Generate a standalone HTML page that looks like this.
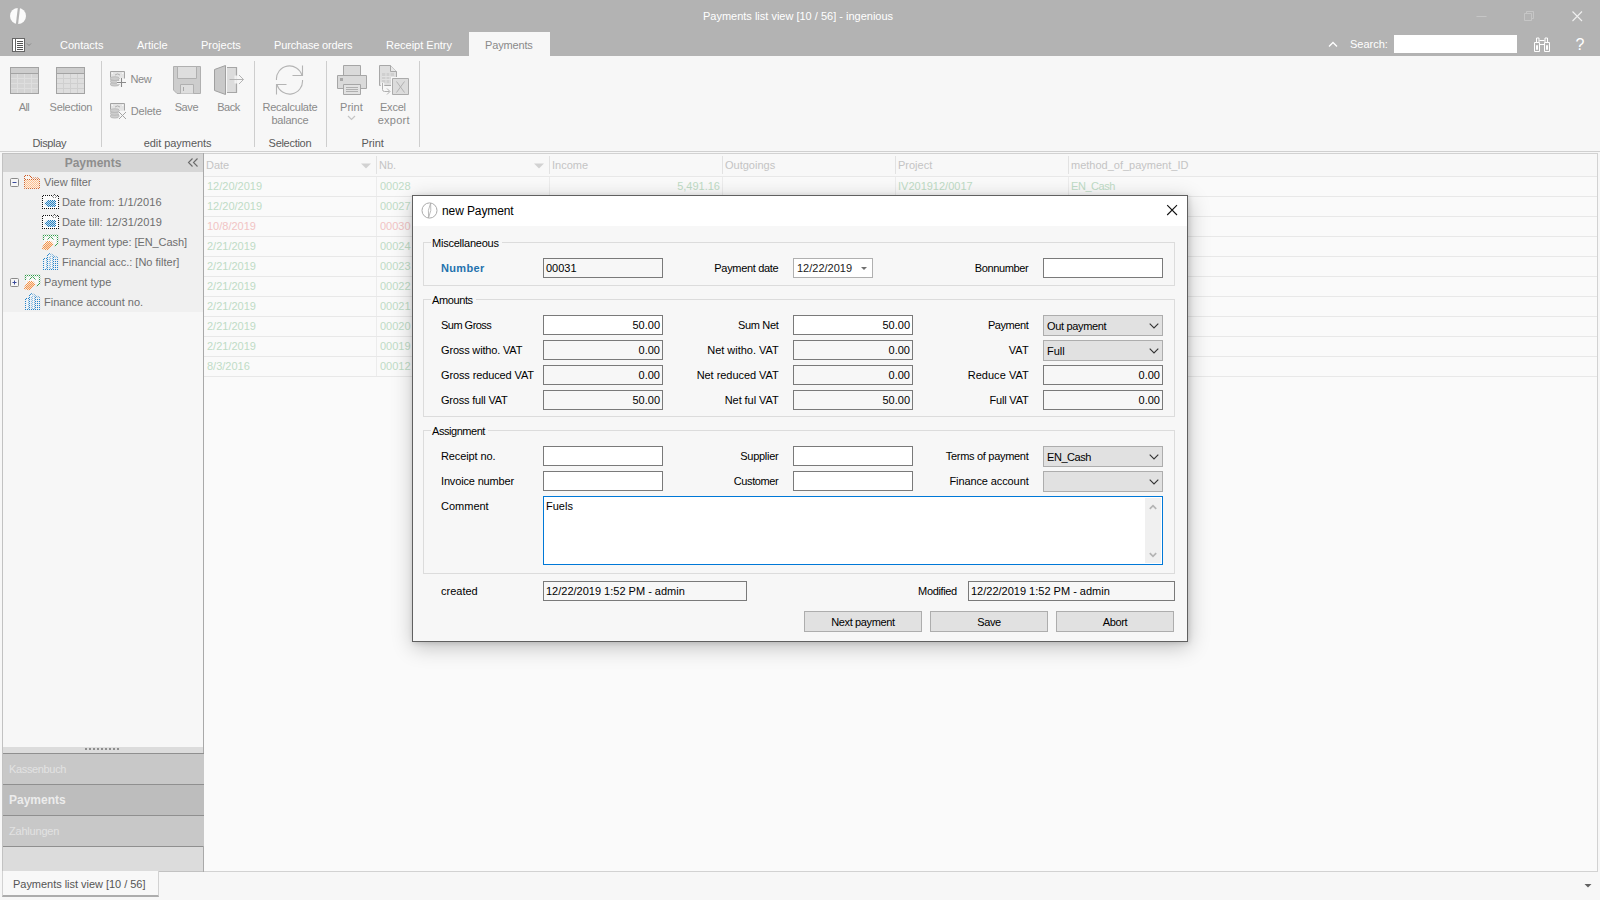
<!DOCTYPE html>
<html>
<head>
<meta charset="utf-8">
<title>Payments list view</title>
<style>
*{box-sizing:border-box;margin:0;padding:0}
html,body{width:1600px;height:900px;overflow:hidden;background:#f7f7f7}
body{font-family:"Liberation Sans",sans-serif;font-size:11px;color:#000;position:relative}
.a{position:absolute;white-space:nowrap}
#hdr{left:0;top:0;width:1600px;height:56px;background:#b3b3b3}
.tab{color:#fff;top:38px;height:14px;line-height:14px}
#tabact{left:469px;top:32px;width:81px;height:24px;background:#f7f7f7}
#rib{left:0;top:56px;width:1600px;height:96px;background:#f7f7f7}
.rl{color:#8a8a8a;text-align:center;line-height:13px}
.gl{color:#5a5a5a;text-align:center;top:137px;line-height:13px}
.sep{width:1px;top:61px;height:86px;background:#cecece}
.tr{color:#6e6e6e;height:14px;line-height:14px}
.nav{left:3px;width:201px;height:31px;background:#c8c8c8;border-top:1px solid #8f8f8f;color:#e2e2e2;padding-left:6px;line-height:31px}
.gh{color:#c4c4c4;top:158px;line-height:14px}
.gr{left:204px;width:1393px;height:1px;background:#e8e8e8}
.gv{top:176px;width:1px;height:200px;background:#ececec}
.gc{color:#bfdcc6;line-height:14px}
.gc.r{color:#f1c4c4}
#dlg{left:412px;top:195px;width:776px;height:447px;background:#f7f7f7;border:1px solid #606060;box-shadow:1px 5px 20px 0 rgba(0,0,0,.24),1px 1px 5px 0 rgba(0,0,0,.14)}
#dlgt{left:0;top:0;width:774px;height:30px;background:#fff}
.grp{border:1px solid #dcdcdc}
.grpl{background:#f7f7f7;padding:0 3px 0 1px;line-height:13px}
.lb{line-height:13px}
.in{height:20px;border:1px solid #7a7a7a;background:#fff;line-height:18px;padding:0 2px}
.in.ro{background:#f7f7f7}
.in.n{text-align:right}
.cb{height:21px;border:1px solid #adadad;background:#e1e1e1;line-height:19px;padding:1px 3px 0}
.btn{height:21px;width:118px;border:1px solid #adadad;background:#e1e1e1;text-align:center;line-height:19px;padding-top:1px;letter-spacing:-0.35px}
</style>
</head>
<body>
<div id="hdr" class="a">
<svg class="a" style="left:9px;top:7px" width="18" height="18" viewBox="0 0 18 18"><ellipse cx="9" cy="9" rx="8" ry="8.1" fill="#fbfbfb"/><path d="M10 0 L7.900 18" stroke="#b3b3b3" stroke-width="2.200" fill="none"/></svg>
<div class="a" style="left:598px;top:9px;width:400px;text-align:center;color:#fff;line-height:14px">Payments list view [10 / 56] - ingenious</div>
<svg class="a" style="left:1470px;top:8px" width="120" height="16" viewBox="0 0 120 16"><path d="M6.5 8.5h10" stroke="#c6c6c6" fill="none"/><path d="M54.5 5.5h7v7h-7z M56.5 5.5v-2h7v7h-2" stroke="#c6c6c6" fill="none"/><path d="M102.5 3.5l9.5 9.5M112 3.5l-9.5 9.5" stroke="#f0f0f0" stroke-width="1.1" fill="none"/></svg>
<svg class="a" style="left:11px;top:37px" width="24" height="16" viewBox="0 0 24 16"><rect x="1.5" y="1.5" width="12" height="13" fill="#fff" stroke="#666" stroke-width="1"/><path d="M4.5 2v12" stroke="#666" stroke-width="1"/><path d="M6 4.5h6M6 6.5h6M6 8.5h6M6 10.5h6M6 12.5h6" stroke="#555" stroke-width="1"/><path d="M16 6.5l2 2l2-2" stroke="#8a8a8a" fill="none"/></svg>
<div id="tabact" class="a"></div>
<div class="a tab" style="left:60px">Contacts</div>
<div class="a tab" style="left:137px">Article</div>
<div class="a tab" style="left:201px">Projects</div>
<div class="a tab" style="left:274px;letter-spacing:-0.160px">Purchase orders</div>
<div class="a tab" style="left:386px">Receipt Entry</div>
<div class="a tab" style="left:485px;color:#8a8a8a;letter-spacing:-0.150px">Payments</div>
<svg class="a" style="left:1327px;top:39px" width="12" height="10" viewBox="0 0 12 10"><path d="M2 7.5l4-4l4 4" stroke="#fff" stroke-width="1.3" fill="none"/></svg>
<div class="a tab" style="left:1350px;top:37px">Search:</div>
<div class="a" style="left:1394px;top:35px;width:123px;height:18px;background:#fff"></div>
<svg class="a" style="left:1533px;top:36px" width="18" height="17" viewBox="0 0 18 17"><g stroke="#fff" fill="none" stroke-width="1"><path d="M1.5 6.5h5v9h-5z M11.5 6.5h5v9h-5z"/><path d="M3.5 6v-4h2.5v4 M12 6v-4h2.5v4"/><path d="M6.5 4.5h5M6.5 8.5h5"/><path d="M3.5 9.5h1v4h-1z M13.5 9.5h1v4h-1z"/></g></svg>
<div class="a" style="left:1575.500px;top:36px;color:#fff;font-size:16px;line-height:18px">?</div>
</div>
<div id="rib" class="a">
<svg class="a" style="left:10px;top:11px" width="29" height="27" viewBox="0 0 29 27"><rect x="0.5" y="0.5" width="28" height="26" fill="#d4d4d4" stroke="#a3a3a3"/><rect x="1" y="1" width="27" height="5" fill="#cdcdcd"/><path d="M0.5 6.5h28" stroke="#a3a3a3"/><path d="M1 11.5h27M1 16.5h27M1 21.5h27M7.5 7v19M14.5 7v19M21.5 7v19" stroke="#dedede"/></svg><svg class="a" style="left:56px;top:11px" width="29" height="27" viewBox="0 0 29 27"><rect x="0.5" y="0.5" width="28" height="26" fill="#dedede" stroke="#a3a3a3"/><rect x="1" y="1" width="27" height="5" fill="#cdcdcd"/><path d="M0.5 6.5h28" stroke="#a3a3a3"/><path d="M1 11.5h27M1 16.5h27M1 21.5h27M7.5 7v19M14.5 7v19M21.5 7v19" stroke="#cfcfcf"/></svg>
<div class="a rl" style="left:18.7px;top:45px;text-align:left;letter-spacing:-0.61px">All</div>

<div class="a rl" style="left:49.6px;top:45px;text-align:left;letter-spacing:-0.3px">Selection</div>

<div class="a sep" style="left:101px;top:5px"></div>
<svg class="a" style="left:110px;top:15px" width="17" height="17" viewBox="0 0 17 17"><path d="M0.5 9v-8.500h14v7" fill="#e3e3e3" stroke="#a4a4a4"/><rect x="1.500" y="1.500" width="1.500" height="1.500" fill="#f6f6f6"/><rect x="12" y="1.500" width="1.500" height="1.500" fill="#f6f6f6"/><path d="M5 4q2.500-2.200 5 0" fill="none" stroke="#b0b0b0"/><path d="M-0.500 6.500h11v3h6v8h-17z" fill="#f7f7f7" opacity="0.550"/><g fill="#cdcdcd" stroke="#b4b4b4" stroke-width="0.800"><ellipse cx="4.800" cy="13.200" rx="4.600" ry="1.900"/><ellipse cx="4.800" cy="10.400" rx="4.600" ry="1.900"/><ellipse cx="4.800" cy="7.600" rx="4.600" ry="1.900"/></g><path d="M7 11.500h9M11.500 7v9" stroke="#f7f7f7" stroke-width="3" fill="none"/><path d="M7 11.500h9M11.500 7v9" stroke="#8a8a8a" fill="none" stroke-width="1.100"/></svg><svg class="a" style="left:110px;top:47px" width="17" height="17" viewBox="0 0 17 17"><path d="M0.5 9v-8.500h14v7" fill="#e3e3e3" stroke="#a4a4a4"/><rect x="1.500" y="1.500" width="1.500" height="1.500" fill="#f6f6f6"/><rect x="12" y="1.500" width="1.500" height="1.500" fill="#f6f6f6"/><path d="M5 4q2.500-2.200 5 0" fill="none" stroke="#b0b0b0"/><path d="M-0.500 6.500h11v3h6v8h-17z" fill="#f7f7f7" opacity="0.550"/><g fill="#cdcdcd" stroke="#b4b4b4" stroke-width="0.800"><ellipse cx="4.800" cy="13.200" rx="4.600" ry="1.900"/><ellipse cx="4.800" cy="10.400" rx="4.600" ry="1.900"/><ellipse cx="4.800" cy="7.600" rx="4.600" ry="1.900"/></g><path d="M9 9l7 7M16 9l-7 7" stroke="#f7f7f7" stroke-width="2.500" fill="none"/><path d="M9 9l7 7M16 9l-7 7" stroke="#a4a4a4" fill="none"/></svg>
<div class="a rl" style="left:130.6px;top:17px;text-align:left;letter-spacing:-0.47px">New</div>

<div class="a rl" style="left:130.7px;top:49px;text-align:left;letter-spacing:-0.18px">Delete</div>

<svg class="a" style="left:173px;top:10px" width="28" height="28" viewBox="0 0 28 28"><path d="M0.5 0.5h27v27h-23.5l-3.5-3.5z" fill="#cdcdcd" stroke="#b0b0b0"/><path d="M4.5 0.5h19v12h-19z" fill="#dedede" stroke="#b0b0b0"/><path d="M7.5 27.5v-9h13v9" fill="#dedede" stroke="#b0b0b0"/><path d="M10.5 21v4" stroke="#a8a8a8"/></svg>
<div class="a rl" style="left:174.7px;top:45px;text-align:left;letter-spacing:-0.42px">Save</div>

<svg class="a" style="left:213px;top:9px" width="32" height="30" viewBox="0 0 32 30"><path d="M14 2.500h9.500v25h-9.500z" fill="#dcdcdc"/><path d="M14 2.500h9.500v25h-9.500" fill="none" stroke="#a6a6a6" stroke-width="1.200"/><path d="M1.500 4.500l11-4v29l-11-4z" fill="#c9c9c9" stroke="#a0a0a0"/><path d="M21.500 10.500h4v8h-4z" fill="#f7f7f7" opacity="0.850"/><path d="M16.500 14.500h14M26 10l4.500 4.500l-4.500 4.500" fill="none" stroke="#b4b4b4"/></svg>
<div class="a rl" style="left:217.3px;top:45px;text-align:left;letter-spacing:-0.52px">Back</div>

<div class="a sep" style="left:254px;top:5px"></div>
<svg class="a" style="left:275px;top:9px" width="30" height="30" viewBox="0 0 30 30"><g fill="none" stroke="#b4b4b4" stroke-width="1.1"><path d="M1.5 15a13 13 0 0 1 25.5-4.500"/><path d="M27.5 0.5v10h-10" /><path d="M27.5 15a13 13 0 0 1-25.500 4.500"/><path d="M1.5 29.500v-10h10"/></g></svg>
<div class="a rl" style="left:262.5px;top:45px;text-align:left;letter-spacing:-0.23px">Recalculate</div>
<div class="a rl" style="left:271.4px;top:58px;text-align:left;letter-spacing:-0.21px">balance</div>

<div class="a sep" style="left:326px;top:5px"></div>
<svg class="a" style="left:337px;top:9px" width="30" height="30" viewBox="0 0 30 30"><g stroke="#a6a6a6" fill="#dadada"><path d="M6.5 0.5h17v10h-17z"/><path d="M0.5 10.5h29v13h-29z"/><path d="M6.5 19.500h17v10h-17z" fill="#e2e2e2"/></g><rect x="3" y="13" width="3" height="3" fill="#a8a8a8"/><path d="M9 22.500h12M9 24.500h12M9 26.500h12" stroke="#b0b0b0"/></svg>
<div class="a rl" style="left:340.0px;top:45px;text-align:left;letter-spacing:0.04px">Print</div>

<svg class="a" style="left:347px;top:59px" width="9" height="6" viewBox="0 0 9 6"><path d="M1 1l3.500 3.500l3.500-3.500" stroke="#c4c4c4" fill="none" stroke-width="1.200"/></svg>
<svg class="a" style="left:379px;top:9px" width="30" height="30" viewBox="0 0 30 30"><path d="M0.5 0.5h11l6 6v14h-17z" fill="#dedede" stroke="#a8a8a8"/><path d="M11.500 0.5v6h6" fill="#e8e8e8" stroke="#a8a8a8"/><path d="M3 8h12v10h-12z" fill="#cfcfcf"/><path d="M3 11.500h12M3 14.500h12M7 8v10M11 8v10" stroke="#e2e2e2"/><path d="M12 12h18v18h-18z" fill="#f7f7f7"/><path d="M3.500 17.500v7q0 2 2 2h5" stroke="#f7f7f7" stroke-width="3.500" fill="none"/><path d="M13.500 13.500h16v16h-16z" fill="#dcdcdc" stroke="#ababab"/><path d="M17.500 16.500l8 11M25.500 16.500l-8 11" stroke="#b2b2b2" fill="none" stroke-width="1"/><path d="M3.500 18v6.500q0 2 2 2h5M8 23.500l3 3l-3 3" stroke="#b0b0b0" fill="none"/></svg>
<div class="a rl" style="left:380.0px;top:45px;text-align:left;letter-spacing:-0.22px">Excel</div>
<div class="a rl" style="left:377.7px;top:58px;text-align:left;letter-spacing:0.24px">export</div>

<div class="a sep" style="left:419px;top:5px"></div>
<div class="a gl" style="left:32.5px;top:81px;text-align:left;letter-spacing:-0.35px">Display</div>

<div class="a gl" style="left:143.7px;top:81px;text-align:left;letter-spacing:-0.05px">edit payments</div>

<div class="a gl" style="left:268.6px;top:81px;text-align:left;letter-spacing:-0.29px">Selection</div>

<div class="a gl" style="left:361.4px;top:81px;text-align:left;letter-spacing:-0.03px">Print</div>

<div class="a" style="left:0;top:95px;width:1600px;height:1px;background:#d0d0d0"></div>
</div>
<svg width="0" height="0" style="position:absolute"><defs>
<pattern id="ck" width="2" height="2" patternUnits="userSpaceOnUse"><rect width="1" height="1" fill="#fff"/><rect x="1" y="1" width="1" height="1" fill="#fff"/></pattern>
<mask id="dm" maskUnits="userSpaceOnUse" x="0" y="0" width="20" height="20"><rect width="20" height="20" fill="url(#ck)"/></mask>
</defs></svg>
<div class="a" style="left:2px;top:153px;width:202px;height:719px;background:#c2c2c2"></div>
<div class="a" style="left:203px;top:153px;width:1px;height:719px;background:#a9a9a9"></div>
<div class="a" style="left:3px;top:154px;width:200px;height:717px;background:#f7f7f7"></div>
<div class="a" style="left:3px;top:154px;width:200px;height:18px;background:#d6d6d6"></div>
<div class="a" style="left:3px;top:156px;width:180px;text-align:center;font-weight:bold;color:#8e8e8e;font-size:12px;line-height:14px">Payments</div>
<svg class="a" style="left:187px;top:158px" width="12" height="10" viewBox="0 0 12 10"><path d="M5.5 0.5l-4 4l4 4M10.5 0.5l-4 4l4 4" stroke="#6a6a6a" fill="none" stroke-width="1.100"/></svg>
<div class="a" style="left:3px;top:172px;width:200px;height:140px;background:#f0f0f0"></div>
<svg class="a" style="left:24px;top:174px" width="16" height="16" viewBox="0 0 16 16"><path d="M1 2h5l2 2h7v3h-14z" fill="#f8f4f0"/><path d="M1 6h14v8h-14z" fill="#fdf0e4"/><g mask="url(#dm)"><path d="M0.5 7v-5.500h5l2.500 2.500h7v3" fill="none" stroke="#cf5a22"/><path d="M0.5 5.500h15v9h-15z" fill="#fbbf90" stroke="#d4662c"/></g></svg>
<div class="a tr" style="left:44px;top:175px;letter-spacing:0px">View filter</div>
<svg class="a" style="left:10px;top:178px" width="9" height="9" viewBox="0 0 9 9"><rect x="0.5" y="0.5" width="8" height="8" rx="1" fill="#f6f6f6" stroke="#8a8a8a"/><path d="M2.5 4.5h4" stroke="#3a4a9a" fill="none"/></svg>
<svg class="a" style="left:42px;top:194px" width="17" height="16" viewBox="0 0 17 16"><rect x="1" y="1" width="15" height="14" fill="#fbfbfb"/><g mask="url(#dm)"><rect x="0.5" y="1.500" width="16" height="13" fill="none" stroke="#111" stroke-width="1"/><path d="M12.500 0l2 2l-2 2l-2-2z" fill="#fbfbfb" stroke="#111"/><path d="M2 9.500l3.500-3.500h8.500v7h-8.500z" fill="#1574b6"/></g><path d="M3 9.500l3-3h7v6h-7z" fill="#5aa0d4" opacity="0.35"/></svg>
<div class="a tr" style="left:62px;top:195px;letter-spacing:0.14px">Date from: 1/1/2016</div>
<svg class="a" style="left:42px;top:214px" width="17" height="16" viewBox="0 0 17 16"><rect x="1" y="1" width="15" height="14" fill="#fbfbfb"/><g mask="url(#dm)"><rect x="0.5" y="1.500" width="16" height="13" fill="none" stroke="#111" stroke-width="1"/><path d="M12.500 0l2 2l-2 2l-2-2z" fill="#fbfbfb" stroke="#111"/><path d="M2 9.500l3.500-3.500h8.500v7h-8.500z" fill="#1574b6"/></g><path d="M3 9.500l3-3h7v6h-7z" fill="#5aa0d4" opacity="0.35"/></svg>
<div class="a tr" style="left:62px;top:215px;letter-spacing:0.1px">Date till: 12/31/2019</div>
<svg class="a" style="left:42px;top:234px" width="17" height="17" viewBox="0 0 17 17"><path d="M2 1h14v9h-14z" fill="#f9f9f9"/><g mask="url(#dm)" fill="none"><path d="M1.500 6v-4.500h14v8.500l-3 2" stroke="#2f9a48" stroke-width="1.400"/><path d="M5.500 5.500l3-2.500l3 2.500" stroke="#2f9a48" stroke-width="1.100"/><path d="M0 14.500l4-7h5l2 2.500l-5 6z" fill="#f68c3c" stroke="#f68c3c"/></g><path d="M2 14l3-5.500h4l1 2l-4 4.500z" fill="#f9b27a" opacity="0.45"/></svg>
<div class="a tr" style="left:62px;top:235px;letter-spacing:-0.07px">Payment type: [EN_Cash]</div>
<svg class="a" style="left:43px;top:253px" width="16" height="17" viewBox="0 0 16 17"><g mask="url(#dm)" fill="#f4f8fc" stroke="#2484cc" stroke-width="1.100"><path d="M0.5 16.500v-11h3.500v11z"/><path d="M4.500 16.500v-14l2.500-2l3 2v14z"/><path d="M10.500 16.500v-12l2-1l2 1.500v11.500z"/><path d="M7 3v13M12.500 6v10" stroke-width="1"/></g></svg>
<div class="a tr" style="left:62px;top:255px;letter-spacing:0px">Financial acc.: [No filter]</div>
<svg class="a" style="left:24px;top:274px" width="17" height="17" viewBox="0 0 17 17"><path d="M2 1h14v9h-14z" fill="#f9f9f9"/><g mask="url(#dm)" fill="none"><path d="M1.500 6v-4.500h14v8.500l-3 2" stroke="#2f9a48" stroke-width="1.400"/><path d="M5.500 5.500l3-2.500l3 2.500" stroke="#2f9a48" stroke-width="1.100"/><path d="M0 14.500l4-7h5l2 2.500l-5 6z" fill="#f68c3c" stroke="#f68c3c"/></g><path d="M2 14l3-5.500h4l1 2l-4 4.500z" fill="#f9b27a" opacity="0.45"/></svg>
<div class="a tr" style="left:44px;top:275px;letter-spacing:0px">Payment type</div>
<svg class="a" style="left:10px;top:278px" width="9" height="9" viewBox="0 0 9 9"><rect x="0.5" y="0.5" width="8" height="8" rx="1" fill="#f6f6f6" stroke="#8a8a8a"/><path d="M2.5 4.5h4M4.5 2.5v4" stroke="#3a4a9a" fill="none"/></svg>
<svg class="a" style="left:25px;top:293px" width="16" height="17" viewBox="0 0 16 17"><g mask="url(#dm)" fill="#f4f8fc" stroke="#2484cc" stroke-width="1.100"><path d="M0.5 16.500v-11h3.500v11z"/><path d="M4.500 16.500v-14l2.500-2l3 2v14z"/><path d="M10.500 16.500v-12l2-1l2 1.500v11.500z"/><path d="M7 3v13M12.500 6v10" stroke-width="1"/></g></svg>
<div class="a tr" style="left:44px;top:295px;letter-spacing:0px">Finance account no.</div>
<div class="a" style="left:3px;top:747px;width:200px;height:6px;background:#dcdcdc"></div>
<div class="a" style="left:85px;top:748px;width:35px;height:2px;background:repeating-linear-gradient(90deg,#8e8e8e 0 2px,transparent 2px 4px)"></div>
<div class="a nav" style="top:753px;letter-spacing:-0.35px">Kassenbuch</div>
<div class="a nav" style="top:784px;background:#bdbdbd;font-weight:bold;color:#ececec;font-size:12px">Payments</div>
<div class="a nav" style="top:815px;letter-spacing:-0.2px">Zahlungen</div>
<div class="a" style="left:3px;top:846px;width:200px;height:25px;background:#dcdcdc;border-top:1px solid #8f8f8f"></div>
<div class="a" style="left:204px;top:153px;width:1394px;height:719px;background:#fafafa;border:1px solid #d2d2d2;border-left:none"></div>
<div class="a" style="left:204px;top:154px;width:1393px;height:22px;background:#f8f8f8"></div>
<div class="a gh" style="left:206px">Date</div>
<div class="a gh" style="left:379px">Nb.</div>
<div class="a gh" style="left:552px">Income</div>
<div class="a gh" style="left:725px">Outgoings</div>
<div class="a gh" style="left:898px">Project</div>
<div class="a gh" style="left:1071px">method_of_payment_ID</div>
<svg class="a" style="left:361px;top:163px" width="10" height="6" viewBox="0 0 10 6"><path d="M0 0.5h10l-5 5z" fill="#d2d2d2"/></svg>
<svg class="a" style="left:534px;top:163px" width="10" height="6" viewBox="0 0 10 6"><path d="M0 0.5h10l-5 5z" fill="#d2d2d2"/></svg>
<div class="a" style="left:376px;top:156px;width:1px;height:18px;background:#e2e2e2"></div>
<div class="a gv" style="left:376px"></div>
<div class="a" style="left:549px;top:156px;width:1px;height:18px;background:#e2e2e2"></div>
<div class="a gv" style="left:549px"></div>
<div class="a" style="left:722px;top:156px;width:1px;height:18px;background:#e2e2e2"></div>
<div class="a gv" style="left:722px"></div>
<div class="a" style="left:895px;top:156px;width:1px;height:18px;background:#e2e2e2"></div>
<div class="a gv" style="left:895px"></div>
<div class="a" style="left:1068px;top:156px;width:1px;height:18px;background:#e2e2e2"></div>
<div class="a gv" style="left:1068px"></div>
<div class="a gr" style="top:176px"></div>
<div class="a gr" style="top:196px"></div>
<div class="a gr" style="top:216px"></div>
<div class="a gr" style="top:236px"></div>
<div class="a gr" style="top:256px"></div>
<div class="a gr" style="top:276px"></div>
<div class="a gr" style="top:296px"></div>
<div class="a gr" style="top:316px"></div>
<div class="a gr" style="top:336px"></div>
<div class="a gr" style="top:356px"></div>
<div class="a gr" style="top:376px"></div>
<div class="a gc" style="left:207px;top:179px">12/20/2019</div><div class="a gc" style="left:380px;top:179px">00028</div>
<div class="a gc" style="left:207px;top:199px">12/20/2019</div><div class="a gc" style="left:380px;top:199px">00027</div>
<div class="a gc r" style="left:207px;top:219px">10/8/2019</div><div class="a gc r" style="left:380px;top:219px">00030</div>
<div class="a gc" style="left:207px;top:239px">2/21/2019</div><div class="a gc" style="left:380px;top:239px">00024</div>
<div class="a gc" style="left:207px;top:259px">2/21/2019</div><div class="a gc" style="left:380px;top:259px">00023</div>
<div class="a gc" style="left:207px;top:279px">2/21/2019</div><div class="a gc" style="left:380px;top:279px">00022</div>
<div class="a gc" style="left:207px;top:299px">2/21/2019</div><div class="a gc" style="left:380px;top:299px">00021</div>
<div class="a gc" style="left:207px;top:319px">2/21/2019</div><div class="a gc" style="left:380px;top:319px">00020</div>
<div class="a gc" style="left:207px;top:339px">2/21/2019</div><div class="a gc" style="left:380px;top:339px">00019</div>
<div class="a gc" style="left:207px;top:359px">8/3/2016</div><div class="a gc" style="left:380px;top:359px">00012</div>
<div class="a gc" style="left:620px;top:179px;width:100px;text-align:right">5,491.16</div><div class="a gc" style="left:898px;top:179px">IV201912/0017</div><div class="a gc" style="left:1071px;top:179px;letter-spacing:-0.450px">EN_Cash</div>
<div class="a" style="left:0;top:872px;width:1600px;height:28px;background:#f7f7f7"></div>
<div class="a" style="left:2px;top:871px;width:157px;height:26px;background:#f8f8f8;border:1px solid #d2d2d2;border-top:none;border-bottom:2px solid #adadad"></div>
<div class="a" style="left:13px;top:877px;color:#555;line-height:14px;letter-spacing:-0.03px">Payments list view [10 / 56]</div>
<svg class="a" style="left:1584px;top:884px" width="8" height="4" viewBox="0 0 8 4"><path d="M0.5 0h7l-3.500 3.500z" fill="#626262"/></svg>
<div id="dlg" class="a"><div id="dlgt" class="a"></div>
<svg class="a" style="left:7.500px;top:5.500px" width="17" height="17" viewBox="0 0 17 17"><ellipse cx="8.5" cy="8.5" rx="7.500" ry="7.600" fill="#fff" stroke="#ababab"/><path d="M9.600 1.200q-3.400 7-2 14.600M9.600 1.200q1.400 7-2 14.600" stroke="#ababab" stroke-width="0.800" fill="none"/></svg>
<div class="a" style="left:29px;top:0;font-size:12px;line-height:30px;letter-spacing:-0.100px">new Payment</div>
<svg class="a" style="left:753px;top:8px" width="12" height="12" viewBox="0 0 12 12"><path d="M1.200 1.200l9.800 9.800M11 1.200l-9.800 9.800" stroke="#111" stroke-width="1.100" fill="none"/></svg>
<div class="a grp" style="left:10px;top:46px;width:752px;height:44px"></div><div class="a grpl" style="left:18px;top:41px;letter-spacing:-0.23px">Miscellaneous</div>
<div class="a grp" style="left:10px;top:103px;width:752px;height:118px"></div><div class="a grpl" style="left:18px;top:98px;letter-spacing:-0.39px">Amounts</div>
<div class="a grp" style="left:10px;top:234px;width:752px;height:144px"></div><div class="a grpl" style="left:18px;top:229px;letter-spacing:-0.45px">Assignment</div>
<div class="a lb" style="left:28px;top:66px;font-weight:bold;color:#1f72ae;letter-spacing:0.32px">Number</div>
<div class="a in ro" style="left:130px;top:62px;width:120px;">00031</div>
<div class="a lb" style="right:408.61999999999995px;top:66px;letter-spacing:-0.32px">Payment date</div>
<div class="a" style="left:380px;top:62px;width:80px;height:20px;border:1px solid #b0b0b0;background:#fff;line-height:18px;padding-left:3px;color:#222">12/22/2019<svg class="a" style="right:5px;top:8px" width="6" height="3" viewBox="0 0 6 3"><path d="M0 0h6l-3 3z" fill="#707070"/></svg></div>
<div class="a lb" style="right:158.65999999999997px;top:66px;letter-spacing:-0.36px">Bonnumber</div>
<div class="a in " style="left:630px;top:62px;width:120px;"></div>
<div class="a lb" style="left:28px;top:123px;letter-spacing:-0.52px;">Sum Gross</div>
<div class="a in n " style="left:130px;top:119px;width:120px;">50.00</div>
<div class="a lb" style="right:408.65999999999997px;top:123px;letter-spacing:-0.36px">Sum Net</div>
<div class="a in n " style="left:380px;top:119px;width:120px;">50.00</div>
<div class="a lb" style="left:28px;top:148px;letter-spacing:-0.17px;">Gross witho. VAT</div>
<div class="a in n ro" style="left:130px;top:144px;width:120px;">0.00</div>
<div class="a lb" style="right:408.31999999999994px;top:148px;letter-spacing:-0.02px">Net witho. VAT</div>
<div class="a in n ro" style="left:380px;top:144px;width:120px;">0.00</div>
<div class="a lb" style="left:28px;top:173px;letter-spacing:-0.12px;">Gross reduced VAT</div>
<div class="a in n ro" style="left:130px;top:169px;width:120px;">0.00</div>
<div class="a lb" style="right:408.34999999999997px;top:173px;letter-spacing:-0.05px">Net reduced VAT</div>
<div class="a in n ro" style="left:380px;top:169px;width:120px;">0.00</div>
<div class="a lb" style="left:28px;top:198px;letter-spacing:-0.19px;">Gross full VAT</div>
<div class="a in n ro" style="left:130px;top:194px;width:120px;">50.00</div>
<div class="a lb" style="right:408.35999999999996px;top:198px;letter-spacing:-0.06px">Net ful VAT</div>
<div class="a in n ro" style="left:380px;top:194px;width:120px;">50.00</div>
<div class="a lb" style="right:158.74999999999994px;top:123px;letter-spacing:-0.45px">Payment</div>
<div class="a cb" style="left:630px;top:119px;width:120px;letter-spacing:-0.34px;">Out payment<svg class="a" style="right:3px;top:7px" width="10" height="6" viewBox="0 0 10 6"><path d="M0.700 0.700l4.300 4.300l4.300-4.300" stroke="#333" fill="none" stroke-width="1.100"/></svg></div>
<div class="a lb" style="right:158.21999999999994px;top:148px;letter-spacing:0.08px">VAT</div>
<div class="a cb" style="left:630px;top:144px;width:120px;">Full<svg class="a" style="right:3px;top:7px" width="10" height="6" viewBox="0 0 10 6"><path d="M0.700 0.700l4.300 4.300l4.300-4.300" stroke="#333" fill="none" stroke-width="1.100"/></svg></div>
<div class="a lb" style="right:158.26999999999995px;top:173px;letter-spacing:0.03px">Reduce VAT</div>
<div class="a in n ro" style="left:630px;top:169px;width:120px;">0.00</div>
<div class="a lb" style="right:158.48999999999995px;top:198px;letter-spacing:-0.19px">Full VAT</div>
<div class="a in n ro" style="left:630px;top:194px;width:120px;">0.00</div>
<div class="a lb" style="left:28px;top:254px;letter-spacing:-0.12px;">Receipt no.</div>
<div class="a in " style="left:130px;top:250px;width:120px;"></div>
<div class="a lb" style="right:408.56999999999994px;top:254px;letter-spacing:-0.27px">Supplier</div>
<div class="a in " style="left:380px;top:250px;width:120px;"></div>
<div class="a lb" style="right:158.59999999999997px;top:254px;letter-spacing:-0.3px">Terms of payment</div>
<div class="a cb" style="left:630px;top:250px;width:120px;letter-spacing:-0.44px;">EN_Cash<svg class="a" style="right:3px;top:7px" width="10" height="6" viewBox="0 0 10 6"><path d="M0.700 0.700l4.300 4.300l4.300-4.300" stroke="#333" fill="none" stroke-width="1.100"/></svg></div>
<div class="a lb" style="left:28px;top:279px;letter-spacing:-0.16px;">Invoice number</div>
<div class="a in " style="left:130px;top:275px;width:120px;"></div>
<div class="a lb" style="right:408.68999999999994px;top:279px;letter-spacing:-0.39px">Customer</div>
<div class="a in " style="left:380px;top:275px;width:120px;"></div>
<div class="a lb" style="right:158.40999999999997px;top:279px;letter-spacing:-0.11px">Finance account</div>
<div class="a cb" style="left:630px;top:275px;width:120px;"><svg class="a" style="right:3px;top:7px" width="10" height="6" viewBox="0 0 10 6"><path d="M0.700 0.700l4.300 4.300l4.300-4.300" stroke="#333" fill="none" stroke-width="1.100"/></svg></div>
<div class="a lb" style="left:28px;top:304px;">Comment</div>
<div class="a" style="left:130px;top:300px;width:620px;height:69px;border:1px solid #0078d7;background:#fff;padding:1px 2px;line-height:16px">Fuels<div class="a" style="right:1px;top:1px;width:16px;height:65px;background:#f0f0f0"><svg class="a" style="left:4px;top:6px" width="8" height="6" viewBox="0 0 8 6"><path d="M0.800 4.800l3.200-3.200l3.200 3.200" stroke="#b4b4b4" fill="none" stroke-width="1.700"/></svg><svg class="a" style="left:4px;bottom:5px" width="8" height="6" viewBox="0 0 8 6"><path d="M0.800 1.200l3.200 3.200l3.200-3.200" stroke="#b4b4b4" fill="none" stroke-width="1.700"/></svg></div></div>
<div class="a lb" style="left:28px;top:389px;">created</div>
<div class="a in ro" style="left:130px;top:385px;width:204px;">12/22/2019 1:52 PM - admin</div>
<div class="a lb" style="right:230.14999999999995px;top:389px;letter-spacing:-0.35px">Modified</div>
<div class="a in ro" style="left:555px;top:385px;width:207px;">12/22/2019 1:52 PM - admin</div>
<div class="a btn" style="left:391px;top:415px">Next payment</div>
<div class="a btn" style="left:517px;top:415px">Save</div>
<div class="a btn" style="left:643px;top:415px">Abort</div>
</div>
</body>
</html>
